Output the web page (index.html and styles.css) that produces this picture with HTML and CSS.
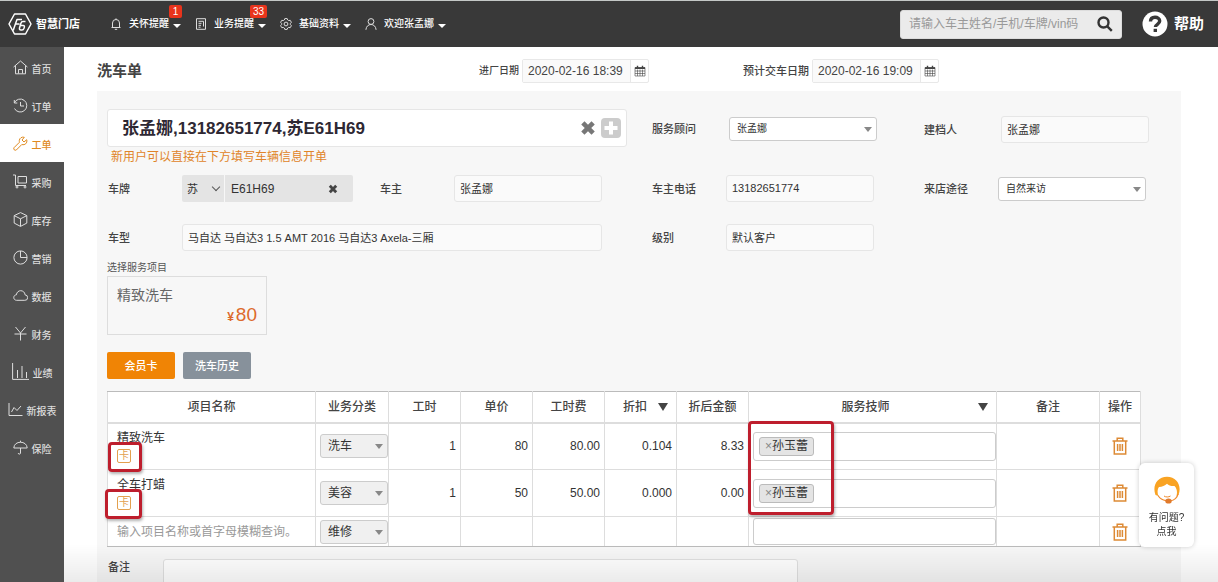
FILE: index.html
```html
<!DOCTYPE html>
<html lang="zh-CN">
<head>
<meta charset="utf-8">
<meta name="viewport" content="width=device-width, initial-scale=1">
<title>洗车单 - 智慧门店</title>
<link rel="stylesheet" href="styles.css">
</head>
<body>
<svg class="defs" aria-hidden="true">
  <symbol id="calendar" viewBox="0 0 12 12"><path d="M1 2.500h10v8.500H1zM1 6h10M1 8.500h10M3.500 4.500V11M6 4.500V11M8.500 4.500V11" fill="none" stroke="currentColor" stroke-width=".6"/><path d="M1 2.300h10v1.700H1zM2.800.8h1.400v2H2.800zM7.800.8h1.400v2H7.800z" fill="currentColor"/></symbol>
  <symbol id="trash" viewBox="0 0 16 18"><path d="M.5 4h15M5.200 4V1.300h5.600V4M2.300 4v13h11.400V4M5.600 7v7M8 7v7M10.400 7v7" fill="none" stroke="currentColor" stroke-width="1.500"/></symbol>
  <symbol id="cross" viewBox="0 0 14 14"><path d="M2.500 2.500l9 9M11.500 2.500l-9 9" fill="none" stroke="currentColor" stroke-width="4"/></symbol>
</svg>

<header class="topbar">
  <a class="brand" href="#">
    <svg class="brand-mark" viewBox="0 0 24 22" fill="none" stroke="currentColor" stroke-width="1.500" stroke-linejoin="round"><path d="M6.500 1h11L23 11l-5.500 10h-11L1 11z"/><path d="M6 15l3-8.500h5M7.500 11h4M17.500 8.500h-2.600c-1.200 0-1.600.6-2 1.800L11.500 15c-.3 1.500.2 2 1.500 2h1c1.200 0 1.600-.5 2-1.700l.3-1c.3-1.200 0-1.800-1.200-1.800h-2.800M6 15l-.8 2.500"/></svg>
    <span>智慧门店</span>
  </a>
  <nav class="topnav" aria-label="顶部导航">
    <a class="topnav-item" href="#">
      <svg viewBox="0 0 12 12"><path d="M2.500 9.500V5a3.500 3.500 0 0 1 7 0v4.500M1.500 9.500h9M4.800 11.300h2.400M6 1.500V.4"/></svg>
      <span>关怀提醒</span><i class="caret"></i><b class="count">1</b>
    </a>
    <a class="topnav-item" href="#">
      <svg viewBox="0 0 12 12"><path d="M1.500.7h9v10.600h-9zM3.500 3.300h5v3M3.500 5.300h3M3.500 7.300h2.500M3.500 9.200h2M8.500 6v2.500"/></svg>
      <span>业务提醒</span><i class="caret"></i><b class="count">33</b>
    </a>
    <a class="topnav-item" href="#">
      <svg viewBox="0 0 12 12"><path d="M4.800.6h2.400l.5 1.400 1 .6 1.500-.3 1.200 2-1 1.100v1.200l1 1.100-1.200 2-1.500-.3-1 .6-.5 1.400H4.800L4.300 10l-1-.6-1.500.3-1.200-2 1-1.100V5.400l-1-1.100 1.200-2 1.500.3 1-.6z"/><circle cx="6" cy="6" r="1.900"/></svg>
      <span>基础资料</span><i class="caret"></i>
    </a>
    <a class="topnav-item" href="#">
      <svg viewBox="0 0 12 12"><circle cx="6" cy="3.500" r="2.900"/><path d="M.9 11.800C1.200 8.500 3.200 6.500 6 6.500s4.800 2 5.100 5.300"/></svg>
      <span>欢迎张孟娜</span><i class="caret"></i>
    </a>
  </nav>
  <form class="search">
    <input type="text" aria-label="搜索" placeholder="请输入车主姓名/手机/车牌/vin码">
    <button type="button" aria-label="搜索"><svg viewBox="0 0 16 16"><circle cx="6.500" cy="6.500" r="5"/><path d="M10.300 10.300l4.500 4.500"/></svg></button>
  </form>
  <a class="help" href="#"><b class="help-mark"><svg viewBox="0 0 26 26"><circle cx="13" cy="13" r="12.500" fill="#fff"/><path d="M8.500 10.500c0-3 2-4.300 4.500-4.300s4.700 1.500 4.700 3.900c0 3.300-4.300 3.100-4.300 6" fill="none" stroke="#393939" stroke-width="3.400"/><path d="M11.600 17.800H15v3.200h-3.400z" fill="#393939"/></svg></b><span>帮助</span></a>
</header>

<div class="shell">
  <nav class="sidebar" aria-label="主导航">
    <a href="#"><svg viewBox="0 0 15 15"><path d="M.6 7L7.500 1l6.900 6M2.500 5.500v8.300h10V5.500M5.500 13.500V9.500h4v4"/></svg><span>首页</span></a>
    <a href="#"><svg viewBox="0 0 15 15"><path d="M1.300 5A6.500 6.500 0 1 1 1.500 10.500M1.300 2v3h3M7.500 4v4h3.500"/></svg><span>订单</span></a>
    <a href="#" class="active"><svg viewBox="0 0 15 15"><path d="M13.700 3.700L11 6 9 4l2.300-2.700C9 .5 6.500 2 6.300 4.500c0 .7 0 1.200.2 1.700L1 11.700c-1 1.600.8 3.200 2.300 2.300l5.500-5.500c3 1 5.900-1.500 4.900-4.800z"/></svg><span>工单</span></a>
    <a href="#"><svg viewBox="0 0 15 15"><path d="M0 1h2.500v10.500H13M5 2.500h8.500V9H5z"/><circle cx="4" cy="13" r="1"/><circle cx="12" cy="13" r="1"/></svg><span>采购</span></a>
    <a href="#"><svg viewBox="0 0 15 15"><path d="M7.500.6l6.300 3v7.500l-6.300 3.300-6.300-3.300V3.600zM1.200 3.600l6.300 3.200 6.300-3.200M7.500 6.800v7.500"/></svg><span>库存</span></a>
    <a href="#"><svg viewBox="0 0 15 15"><circle cx="7.500" cy="7.500" r="6.600"/><path d="M7.500 1v6.500H14"/></svg><span>营销</span></a>
    <a href="#"><svg viewBox="0 0 15 15"><path d="M3.500 12.300h8.300a2.700 2.700 0 0 0 .3-5.400C11.500 1.300 4 1.300 3.400 6.800c-3.500.2-3.500 5.300.1 5.500z"/></svg><span>数据</span></a>
    <a href="#"><svg viewBox="0 0 15 15"><path d="M2.500 1l5 6 5-6M1.500 8h12M7.500 7v7.500"/></svg><span>财务</span></a>
    <a href="#"><svg class="wide" viewBox="0 0 17 17"><path d="M.6 0v16.400H17M5.500 15V7M10 15V3M14.500 15V9" /></svg><span>业绩</span></a>
    <a href="#"><svg viewBox="0 0 15 15"><path d="M1 1v12.500h13.500M3.500 10L6 5.500 9 8.500l4-4.500"/></svg><span>新报表</span></a>
    <a href="#"><svg viewBox="0 0 15 15"><path d="M.8 8C1 .3 14 .3 14.200 8zM7.500 2.200V.7M7.500 8v5c0 1.500-2.300 1.500-2.300 0"/></svg><span>保险</span></a>
  </nav>

  <main class="main">
    <div class="title-row">
      <h1>洗车单</h1>
      <div class="date date-in"><label for="in-date">进厂日期</label><div class="date-box"><input id="in-date" type="text" value="2020-02-16 18:39"><button type="button" aria-label="选择进厂日期"><svg><use href="#calendar"/></svg></button></div></div>
      <div class="date"><label for="out-date">预计交车日期</label><div class="date-box"><input id="out-date" type="text" value="2020-02-16 19:09"><button type="button" aria-label="选择预计交车日期"><svg><use href="#calendar"/></svg></button></div></div>
    </div>

    <section class="panel">
      <div class="form-grid">
        <div class="customer span-2">
          <div class="customer-box">
            <input type="text" aria-label="客户" value="张孟娜,13182651774,苏E61H69">
            <button type="button" class="clear" aria-label="清除"><svg><use href="#cross"/></svg></button>
            <button type="button" class="add" aria-label="新增"><svg viewBox="0 0 20 20"><path d="M10 3.500v13M3.500 10h13" stroke="#fff" stroke-width="4"/></svg></button>
          </div>
          <p>新用户可以直接在下方填写车辆信息开单</p>
        </div>
        <div class="field lead"><label for="advisor">服务顾问</label><div class="select"><select id="advisor"><option>张孟娜</option></select></div></div>
        <div class="field lead last"><label for="creator">建档人</label><input id="creator" type="text" value="张孟娜"></div>

        <div class="field plate"><label for="plate">车牌</label>
          <div class="plate-box">
            <div class="province"><select aria-label="省份"><option>苏</option></select></div>
            <div class="plate-no"><input id="plate" type="text" value="E61H69"><button type="button" aria-label="清除车牌"><svg><use href="#cross"/></svg></button></div>
          </div>
        </div>
        <div class="field"><label for="owner">车主</label><input id="owner" type="text" value="张孟娜"></div>
        <div class="field"><label for="phone">车主电话</label><input id="phone" type="text" value="13182651774"></div>
        <div class="field last"><label for="source">来店途径</label><div class="select"><select id="source"><option>自然来访</option></select></div></div>

        <div class="field span-2"><label for="model">车型</label><input id="model" type="text" value="马自达 马自达3 1.5 AMT 2016 马自达3 Axela-三厢"></div>
        <div class="field"><label for="level">级别</label><input id="level" type="text" value="默认客户"></div>
      </div>

      <h2>选择服务项目</h2>
      <button type="button" class="service"><span>精致洗车</span><span class="price"><small>¥</small>80</span></button>

      <div class="actions">
        <button type="button" class="primary">会员卡</button>
        <button type="button">洗车历史</button>
      </div>

      <table class="items">
        <colgroup><col class="c-name"><col class="c-type"><col class="c-num"><col class="c-num"><col class="c-num"><col class="c-num"><col class="c-num"><col><col class="c-note"><col class="c-op"></colgroup>
        <thead>
          <tr><th>项目名称</th><th>业务分类</th><th>工时</th><th>单价</th><th>工时费</th><th><div class="head-sort">折扣<i></i></div></th><th>折后金额</th><th><div class="head-tech"><span>服务技师</span><i></i></div></th><th>备注</th><th>操作</th></tr>
        </thead>
        <tbody>
          <tr>
            <td class="name">精致洗车<span class="card">卡<i class="mark mark-card"></i></span></td>
            <td class="type"><div class="select"><select aria-label="业务分类"><option>洗车</option></select></div></td>
            <td>1</td><td>80</td><td>80.00</td><td>0.104</td><td>8.33</td>
            <td class="tech"><div class="tags"><span class="tag"><button type="button" aria-label="移除">×</button>孙玉蕾</span><input type="text" aria-label="服务技师"></div><i class="mark mark-tech"></i></td>
            <td></td>
            <td class="op"><button type="button" aria-label="删除"><svg><use href="#trash"/></svg></button></td>
          </tr>
          <tr>
            <td class="name">全车打蜡<span class="card">卡<i class="mark mark-card mark-wide"></i></span></td>
            <td class="type"><div class="select"><select aria-label="业务分类"><option>美容</option></select></div></td>
            <td>1</td><td>50</td><td>50.00</td><td>0.000</td><td>0.00</td>
            <td class="tech"><div class="tags"><span class="tag"><button type="button" aria-label="移除">×</button>孙玉蕾</span><input type="text" aria-label="服务技师"></div></td>
            <td></td>
            <td class="op"><button type="button" aria-label="删除"><svg><use href="#trash"/></svg></button></td>
          </tr>
          <tr class="entry">
            <td class="name"><input type="text" aria-label="项目名称" placeholder="输入项目名称或首字母模糊查询。"></td>
            <td class="type"><div class="select"><select aria-label="业务分类"><option>维修</option></select></div></td>
            <td></td><td></td><td></td><td></td><td></td>
            <td class="tech"><div class="tags"><input type="text" aria-label="服务技师"></div></td>
            <td></td>
            <td class="op"><button type="button" aria-label="删除"><svg><use href="#trash"/></svg></button></td>
          </tr>
        </tbody>
      </table>

      <div class="remark"><label for="remark">备注</label><textarea id="remark"></textarea></div>
    </section>
  </main>
</div>

<div class="fade"></div>
<a class="service-chat" href="#">
  <svg viewBox="0 0 28 28"><path d="M2.500 19C-1 10 4 .8 14 .8S29 10 25.500 19l-2 1c1-4 .5-7.500-2-10-3 .3-5.800-.5-7.500-2.300-2 2-4.800 3-8 3.300-1.800 2.500-1.800 6-.5 9z" fill="#f9a323"/><path d="M5 19.500c2 3.200 4.500 4.700 8 5.200M25 18c-.8 4.200-4 6.200-8 7" fill="none" stroke="#f0892a" stroke-width="1.200"/><path d="M11 20c1.800 1.300 4.600 1.300 6.500 0" fill="none" stroke="#f0892a"/><ellipse cx="15.500" cy="25" rx="3.200" ry="2.600" fill="#e07a2c"/></svg>
  <span>有问题?</span><span>点我</span>
</a>
</body>
</html>
```

FILE: styles.css
```css
* { box-sizing: border-box; }

body {
  margin: 0;
  height: 100vh;
  display: flex;
  flex-direction: column;
  background: #fff;
  color: #333;
  font: 11px/16px "Liberation Sans", "Noto Sans CJK SC", sans-serif;
}

a { color: inherit; text-decoration: none; }
h1, h2, p { margin: 0; }
i { font-style: normal; }
input, select, button, textarea { font: inherit; color: inherit; margin: 0; min-width: 0; }
button { padding: 0; border: 0; background: none; cursor: pointer; }
.defs { position: absolute; width: 0; height: 0; }

/* Top bar */
.topbar {
  flex: none;
  height: 47px;
  display: flex;
  align-items: center;
  padding: 0 14px 0 8px;
  border-top: 1px solid #c4c8c6;
  background: #393939;
  color: #fff;
}
.brand { display: flex; align-items: center; gap: 4px; font-weight: bold; }
.brand-mark { width: 24px; height: 22px; }
.topnav { display: flex; gap: 14px; margin-left: 30px; font-size: 10px; font-weight: 500; }
.topnav-item { position: relative; display: flex; align-items: center; gap: 4px; }
.topnav-item svg { width: 12px; height: 12px; margin-right: 3px; fill: none; stroke: #ddd; }
.caret { margin-top: 3px; border: 4px solid transparent; border-top-color: #fff; border-bottom: 0; }
.count {
  position: absolute;
  right: -1px;
  bottom: 14px;
  min-width: 13px;
  padding: 0 3px;
  border-radius: 2px;
  background: #e8341c;
  font-weight: normal;
  line-height: 13px;
  text-align: center;
}
.search {
  display: flex;
  align-items: center;
  width: 222px;
  height: 29px;
  margin-left: auto;
  border: 1px solid #ddd;
  border-radius: 3px;
  background: #ebebeb;
  color: #333;
  font-size: 12px;
}
.search input { flex: 1; padding: 0 0 0 8px; border: 0; background: none; outline: 0; }
.search input::placeholder { color: #999; }
.search button { width: 32px; height: 16px; }
.search svg { width: 16px; height: 16px; fill: none; stroke: #333; stroke-width: 2.4; }
.help { display: flex; align-items: center; gap: 6px; margin-left: 20px; font-size: 15px; font-weight: bold; }
.help-mark, .help-mark svg { display: block; width: 26px; height: 26px; }

/* Sidebar */
.shell { flex: 1; min-height: 0; display: flex; }
.sidebar { flex: none; width: 64px; padding-top: 1px; background: #505050; color: #ddd; font-size: 10px; font-weight: 500; }
.sidebar a { display: flex; align-items: center; justify-content: center; gap: 4px; height: 38px; }
.sidebar span { padding-top: 5px; }
.sidebar svg { width: 15px; height: 15px; fill: none; stroke: currentColor; }
.sidebar .wide { width: 17px; height: 17px; }
.sidebar .active { background: #fff; color: #e08a1e; }

/* Page */
.main { flex: 1; min-width: 0; padding: 0 37px 0 33px; overflow-y: auto; scrollbar-width: none; }
.title-row { display: flex; align-items: center; height: 44px; padding: 3px 242px 0 0; }
h1 { color: #444; font-size: 15px; }
.date { display: flex; align-items: center; gap: 3px; color: #444; font-weight: 500; }
.date-in { margin: 0 94px 0 auto; font-size: 10px; }
.date-box { display: flex; height: 24px; border: 1px solid #e8e8e8; border-radius: 2px; font-size: 12px; font-weight: normal; }
.date-box input { width: 108px; padding: 0 5px; border: 0; border-right: 1px solid #e8e8e8; background: #fafafa; }
.date-box button { width: 17px; }
.date-box svg { display: block; width: 12px; height: 12px; margin: auto; }

.panel { padding: 18px 35px 20px 10px; background: #f7f7f7; }
.form-grid {
  display: grid;
  grid-template-columns: repeat(3, minmax(0, 272fr)) minmax(0, 223fr);
  grid-template-rows: 55px 49px 49px;
  align-items: center;
}
.span-2 { grid-column: span 2; }
.field { display: grid; grid-template-columns: 75px minmax(0, 1fr); align-items: center; padding-right: 49px; }
.field.last { padding-right: 0; }
.field.plate { padding-right: 26px; }
.field.lead { grid-template-columns: 78px minmax(0, 1fr); align-self: start; padding-right: 46px; margin-top: 8px; }
.field.lead.last { padding-right: 0; margin: 7px -3px 0 0; }
.field label, .remark label { padding-left: 1px; color: #444; font-weight: 500; }
.field > input { width: 100%; height: 27px; padding: 0 5px 2px; border: 1px solid #e6e6e6; border-radius: 3px; background: #fafafa; }

.select { position: relative; }
.select::after {
  content: "";
  position: absolute;
  top: 10px;
  right: 5px;
  border: 4px solid transparent;
  border-top: 5px solid #888;
  border-bottom: 0;
  pointer-events: none;
}
.select select {
  display: block;
  width: 100%;
  height: 24px;
  padding: 0 7px;
  border: 1px solid #ccc;
  border-radius: 3px;
  background: #fff;
  font-size: 10px;
  appearance: none;
}

.customer { align-self: start; padding-right: 24px; }
.customer-box { display: flex; align-items: center; height: 38px; padding: 0 5px 0 14px; border: 1px solid #e6e6e6; border-radius: 3px; background: #fff; }
.customer-box input { flex: 1; padding: 0 0 3px; border: 0; background: none; color: #2e2833; font-size: 17px; font-weight: bold; }
.customer-box svg { display: block; }
.clear svg { width: 16px; height: 16px; color: #777; }
.add { margin-left: 5px; border-radius: 4px; background: #ccc; }
.add svg { width: 20px; height: 20px; }
.customer p { padding-left: 4px; color: #e08428; font-size: 12px; line-height: 20px; }

.plate-box { display: flex; gap: 1px; }
.province { position: relative; width: 42px; flex: none; }
.province::after {
  content: "";
  position: absolute;
  top: 9px;
  right: 5px;
  width: 5px;
  height: 5px;
  border: solid #555;
  border-width: 0 1px 1px 0;
  transform: rotate(45deg);
  pointer-events: none;
}
.province select { width: 100%; height: 27px; padding: 0 5px; border: 0; border-radius: 2px 0 0 2px; background: #e4e4e4; appearance: none; }
.plate-no { flex: 1; min-width: 0; display: flex; align-items: center; height: 27px; padding: 0 15px 0 6px; border-radius: 0 2px 2px 0; background: #e4e4e4; }
.plate-no input { flex: 1; padding: 0; border: 0; background: none; font-size: 12px; }
.plate-no svg { display: block; width: 10px; height: 10px; color: #444; }

h2 { margin-top: -2px; color: #555; font-size: 10px; font-weight: normal; }
.service {
  display: flex;
  flex-direction: column;
  justify-content: space-between;
  width: 160px;
  height: 59px;
  padding: 8px 9px;
  border: 1px solid #ddd;
  color: #666;
  font-size: 14px;
  line-height: 20px;
  text-align: left;
}
.price { align-self: flex-end; color: #dd6a2c; font-size: 19px; }
.price small { margin-right: 2px; font-size: 12px; font-weight: bold; }

.actions { display: flex; gap: 8px; margin: 17px 0 12px; }
.actions button { width: 68px; height: 27px; border-radius: 2px; background: #87919b; color: #fff; font-weight: 500; }
.actions .primary { background: #f08405; }

/* Line items */
.items { width: calc(100% - 5px); border-collapse: collapse; table-layout: fixed; border: 1px solid #c4c4c4; background: #fff; font-size: 12px; }
.c-name { width: 208px; }
.c-type { width: 73px; }
.c-num { width: 72px; }
.c-note { width: 103px; }
.c-op { width: 41px; }
.items th, .items td { padding: 0 4px; border: 1px solid #ddd; }
.items th { height: 31px; border-top-color: #bbb; border-bottom: 2px solid #ddd; color: #444; font-weight: 500; }
.items td { height: 47px; text-align: right; }
.items .entry td { height: 30px; border-bottom-color: #bbb; }
.head-sort { display: flex; align-items: center; justify-content: space-between; padding: 0 4px 0 14px; }
.head-tech { display: flex; align-items: center; padding: 0 4px 0 0; }
.head-tech span { flex: 1; }
.head-sort i, .head-tech i { border: 5px solid transparent; border-top: 8px solid #444; border-bottom: 0; }
.items .name { padding-left: 9px; text-align: left; vertical-align: middle; }
.name input { width: 100%; padding: 0; border: 0; background: none; }
.name input::placeholder { color: #999; }
.card { position: relative; display: block; width: 14px; height: 14px; margin-top: 3px; border: 1px solid #e3a04e; border-radius: 2px; color: #e3a04e; font-size: 10px; line-height: 12px; text-align: center; }
.type .select select { height: 24px; background: #f0f0f0; font-size: 12px; }
.items .type { padding: 0 0 0 4px; text-align: left; }
.items .tech { position: relative; padding: 0 0 0 4px; }
.tags { display: flex; align-items: center; height: 29px; padding-left: 5px; border: 1px solid #ccc; border-radius: 3px; }
.entry .tags { height: 27px; }
.tags input { flex: 1; border: 0; background: none; }
.tag { display: flex; align-items: center; height: 19px; padding: 0 5px; border: 1px solid #bbb; border-radius: 3px; background: #e4e4e4; }
.tag button { color: #888; }
.items .op { padding: 0; text-align: center; }
.op button { display: block; margin: 0 auto; }
.op svg { display: block; width: 16px; height: 18px; color: #dd8a35; }

/* Highlight frames */
.mark { position: absolute; z-index: 1; border: 3px solid #be1e2d; border-radius: 4px; box-shadow: 1px 2px 3px rgba(0, 0, 0, .3); pointer-events: none; }
.mark-card { inset: -8px -12px -10px -10px; }
.mark-wide { left: -13px; }
.mark-tech { top: -3px; left: -1px; width: 86px; height: 94px; }

.remark { display: grid; grid-template-columns: 56px 635px; margin-top: 12px; }
.remark textarea { height: 60px; border: 1px solid #e0e0e0; border-radius: 3px; background: #fff; resize: none; }

/* Floating layers */
.fade { position: fixed; inset: auto 0 0 64px; height: 38px; background: linear-gradient(transparent, rgba(0, 0, 0, .08)); pointer-events: none; }
.service-chat {
  position: fixed;
  right: 24px;
  bottom: 35px;
  display: flex;
  flex-direction: column;
  align-items: center;
  width: 55px;
  padding: 13px 0 8px;
  border-radius: 6px;
  background: #fff;
  box-shadow: 0 0 5px rgba(0, 0, 0, .2);
  font-size: 10px;
  line-height: 14px;
}
.service-chat svg { width: 28px; height: 28px; margin-bottom: 7px; }
```
